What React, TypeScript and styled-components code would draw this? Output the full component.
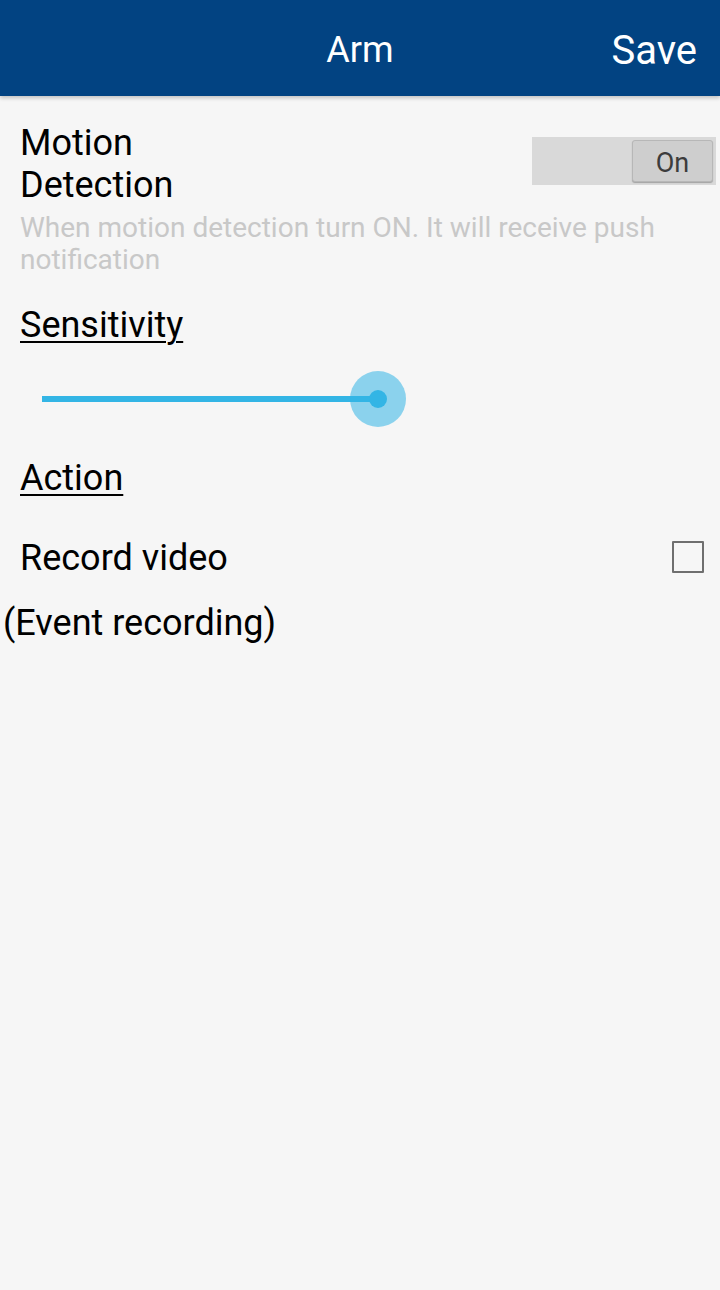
import React from "react";
import styled, { createGlobalStyle } from "styled-components";

const GlobalStyle = createGlobalStyle`
  html, body {
    margin: 0;
    padding: 0;
    background: #f6f6f6;
  }
  body {
    font-family: Roboto, "Noto Sans", "Liberation Sans", sans-serif;
    -webkit-font-smoothing: antialiased;
  }
`;

const Screen = styled.div`
  width: 720px;
  min-height: 1290px;
  background: #f6f6f6;
  display: flex;
  flex-direction: column;
`;

const Header = styled.header`
  height: 96px;
  background: #024382;
  display: grid;
  grid-template-columns: 1fr auto 1fr;
  align-items: center;
  box-shadow: 0 2px 4px rgba(0, 0, 0, 0.22);
  position: relative;
  z-index: 1;
`;

const Title = styled.h1`
  grid-column: 2;
  margin: 0;
  font-size: 36px;
  font-weight: 400;
  color: #ffffff;
  line-height: 1;
  padding-top: 4px;
`;

const SaveButton = styled.button`
  grid-column: 3;
  justify-self: end;
  background: none;
  border: none;
  color: #ffffff;
  font-family: inherit;
  font-size: 40px;
  font-weight: 400;
  line-height: 1;
  padding: 5px 23px 0 0;
`;

const Content = styled.main`
  display: flex;
  flex-direction: column;
  padding: 26px 4px 0 20px;
`;

const SettingRow = styled.div`
  display: flex;
  justify-content: space-between;
  align-items: ${(p: { $align?: string }) => p.$align || "flex-start"};
`;

const Label = styled.div`
  font-size: 36px;
  line-height: 42px;
  color: #000000;
`;

const MotionLabel = styled(Label)`
  width: 200px;
`;

const Description = styled.p`
  margin: 6px 0 0;
  font-size: 28px;
  line-height: 32px;
  color: #c8c8c8;
  padding-right: 40px;
`;

const Switch = styled.div`
  margin-top: 15px;
  width: 184px;
  height: 48px;
  box-sizing: border-box;
  background: #d9d9d9;
  display: flex;
  justify-content: flex-end;
  align-items: center;
  padding: 0 3px;
`;

const SwitchThumb = styled.div`
  width: 81px;
  height: 42px;
  box-sizing: border-box;
  background: #cecece;
  border: 1px solid #b7b7b7;
  border-radius: 3px;
  box-shadow: 0 1px 1px rgba(0, 0, 0, 0.25);
  display: flex;
  align-items: center;
  justify-content: center;
  padding-top: 3px;
  font-size: 27px;
  color: #3c3c3c;
`;

const SectionTitle = styled.div`
  margin-top: ${(p: { $top: number }) => p.$top}px;
  font-size: 36px;
  line-height: 42px;
  color: #000000;
  text-decoration: underline;
  text-decoration-thickness: 2px;
  text-underline-offset: 4px;
`;

const SliderArea = styled.div`
  margin-top: 25px;
  height: 56px;
  display: flex;
  align-items: center;
  padding-left: 22px;
`;

const SliderTrack = styled.div`
  position: relative;
  width: 336px;
  height: 6px;
  background: #cfcfcf;
`;

const SliderFill = styled.div`
  height: 100%;
  background: #33b5e5;
`;

const SliderThumb = styled.div`
  position: absolute;
  top: 50%;
  width: 56px;
  height: 56px;
  margin: -28px 0 0 -28px;
  border-radius: 50%;
  background: rgba(51, 181, 229, 0.55);
  display: flex;
  align-items: center;
  justify-content: center;
  &::after {
    content: "";
    width: 18px;
    height: 18px;
    border-radius: 50%;
    background: #33b5e5;
  }
`;

const ActionRow = styled(SettingRow)`
  margin-top: 38px;
`;

const Checkbox = styled.div`
  width: 32px;
  height: 32px;
  box-sizing: border-box;
  border: 2px solid #6f6f6f;
  border-radius: 1px;
  margin: 0 12px 2px 0;
`;

const Note = styled.div`
  margin: 23px 0 0 -17px;
  font-size: 36px;
  line-height: 42px;
  color: #000000;
`;

export default function App() {
  const sensitivity = 100;
  return (
    <>
      <GlobalStyle />
      <Screen>
        <Header>
          <Title>Arm</Title>
          <SaveButton>Save</SaveButton>
        </Header>
        <Content>
          <SettingRow>
            <MotionLabel>Motion Detection</MotionLabel>
            <Switch>
              <SwitchThumb>On</SwitchThumb>
            </Switch>
          </SettingRow>
          <Description>
            When motion detection turn ON. It will receive push notification
          </Description>
          <SectionTitle $top={28}>Sensitivity</SectionTitle>
          <SliderArea>
            <SliderTrack>
              <SliderFill style={{ width: `${sensitivity}%` }} />
              <SliderThumb style={{ left: `${sensitivity}%` }} />
            </SliderTrack>
          </SliderArea>
          <SectionTitle $top={30}>Action</SectionTitle>
          <ActionRow $align="center">
            <Label>Record video</Label>
            <Checkbox />
          </ActionRow>
          <Note>(Event recording)</Note>
        </Content>
      </Screen>
    </>
  );
}
